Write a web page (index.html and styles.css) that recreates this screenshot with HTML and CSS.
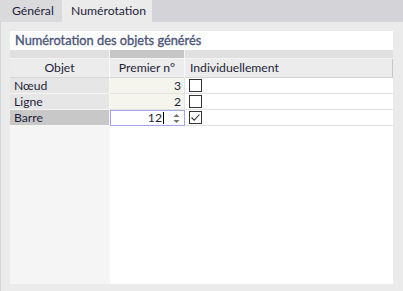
FILE: index.html
```html
<!DOCTYPE html>
<html lang="fr">
<head>
<meta charset="utf-8">
<link rel="stylesheet" href="styles.css">
</head>
<body>
<div class="tabs">
  <div class="tab">Général</div>
  <div class="tab active">Numérotation</div>
</div>
<div class="panel">
  <div class="title">Numérotation des objets générés</div>
  <div class="grid">
    <div class="g g1"></div>
    <div class="g g2"></div>
    <div class="g g3"></div>

    <div class="h h1">Objet</div>
    <div class="h h2">Premier n°</div>
    <div class="h h3">Individuellement</div>

    <div class="c c1">Nœud</div>
    <div class="c c2">3</div>
    <div class="c c3"><span class="box"></span></div>

    <div class="c c1">Ligne</div>
    <div class="c c2">2</div>
    <div class="c c3"><span class="box"></span></div>

    <div class="c c1 sel">Barre</div>
    <div class="c c2 edit"><span class="val">12</span><span class="caret"></span><svg class="spin" width="7" height="11" viewBox="0 0 7 11"><path d="M0.5 4 L3.5 1 L6.5 4 Z" fill="#707070"/><path d="M0.5 7 L3.5 10 L6.5 7 Z" fill="#707070"/></svg></div>
    <div class="c c3"><span class="box"><svg width="11" height="11" viewBox="0 0 11 11"><path d="M1.5 5.5 L4.2 8.2 L9.5 2.5" fill="none" stroke="#333" stroke-width="1.1"/></svg></span></div>

    <div class="f f1"></div>
    <div class="f f2"></div>
    <div class="f f3"></div>
  </div>
</div>
</body>
</html>
```
FILE: styles.css
```css
* { box-sizing: border-box; }
html, body { margin: 0; padding: 0; }
body {
  width: 403px;
  height: 291px;
  background: #ebebeb;
  font-family: Lato, "Noto Sans", sans-serif;
  font-size: 12.2px;
  color: #1f1f3a;
  overflow: hidden;
}
.tabs {
  display: flex;
  height: 22px;
  background: #d3d3d8;
}
.tab {
  height: 22px;
  line-height: 21px;
  padding: 0 12px;
  background: #dadadd;
  width: 62px;
}
.tab.active {
  background: #ebebeb;
  width: 90px;
  padding-left: 9px;
}
.panel {
  height: 269px;
  border-left: 1px solid #d4d4da;
  padding: 9px 10px 7px 9px;
  display: flex;
  flex-direction: column;
}
.title {
  height: 19px;
  background: #fff;
  color: #4d5679;
  padding-left: 5px;
  line-height: 18px;
  font-size: 12.8px;
  -webkit-text-stroke: 0.35px #4d5679;
}
.grid {
  flex: 1;
  display: grid;
  grid-template-columns: 100px 75px 1fr;
  grid-template-rows: 9px 19px 16px 16px 16px 1fr;
}
.g { border-bottom: 1px solid #f4f4f4; border-right: 1px solid #f4f4f4; }
.g1 { background: #e0e0e0; }
.g2 { background: #c6c6c6; }
.g3 { background: #e0e0e0; border-right: none; }
.h {
  background: #ececec;
  border-right: 1px solid #fafafa;
  border-bottom: 1px solid #d6d6d6;
  line-height: 18px;
  text-align: center;
}
.h3 { text-align: left; padding-left: 5px; border-right: 1px solid #c8c8c8; }
.c {
  border-bottom: 1px solid #e2e2e2;
  line-height: 15px;
}
.c1 {
  background: #e6e6e6;
  border-right: 1px solid #f6f6f6;
  border-bottom-color: #f6f6f6;
  padding-left: 4px;
}
.c1.sel { background: #c8c8c8; }
.c2 {
  background: #f5f5ee;
  border-right: 1px solid #e2e2e2;
  text-align: right;
  padding-right: 3px;
}
.c3 {
  background: #fff;
  padding-left: 4px;
  display: flex;
  align-items: center;
}
.c2.edit {
  background: #fff;
  border: 1px solid #a4a4ee;
  display: flex;
  align-items: center;
  justify-content: flex-end;
  padding-right: 4px;
  line-height: 14px;
}
.caret {
  width: 1px;
  height: 12px;
  background: #000;
  margin-left: 1px;
  margin-right: 9px;
}
.spin { display: block; }
.box {
  width: 13px;
  height: 13px;
  border: 1px solid #333;
  background: #fff;
  display: flex;
  align-items: center;
  justify-content: center;
}
.box svg { display: block; }
.f1 { background: #f5f5f5; }
.f2, .f3 { background: #fff; }
```
